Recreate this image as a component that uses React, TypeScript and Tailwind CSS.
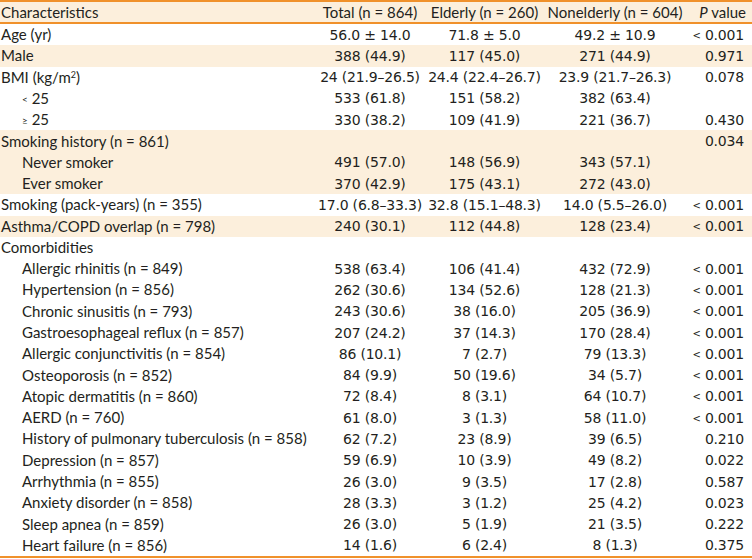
import React from "react";

type Row = {
  label: React.ReactNode;
  indent?: boolean;
  shade?: boolean;
  t?: string;
  e?: string;
  n?: string;
  p?: string;
};

const Lt = () => <span className="text-[10px] relative -top-[1px]">&lt;</span>;
const Ge = () => <span className="text-[10px] relative -top-[1px]">≥</span>;

const pv = (s?: string) => {
  if (!s) return null;
  if (s.startsWith("<")) {
    return (
      <>
        <Lt /> {s.slice(2)}
      </>
    );
  }
  return s;
};

const rows: Row[] = [
  { label: "Age (yr)", t: "56.0 ± 14.0", e: "71.8 ± 5.0", n: "49.2 ± 10.9", p: "< 0.001" },
  { label: "Male", shade: true, t: "388 (44.9)", e: "117 (45.0)", n: "271 (44.9)", p: "0.971" },
  {
    label: (
      <>
        BMI (kg/m<sup className="text-[9px] relative -top-[5px]">2</sup>)
      </>
    ),
    t: "24 (21.9–26.5)",
    e: "24.4 (22.4–26.7)",
    n: "23.9 (21.7–26.3)",
    p: "0.078",
  },
  { label: (<><Lt /> 25</>), indent: true, t: "533 (61.8)", e: "151 (58.2)", n: "382 (63.4)" },
  { label: (<><Ge /> 25</>), indent: true, t: "330 (38.2)", e: "109 (41.9)", n: "221 (36.7)", p: "0.430" },
  { label: "Smoking history (n = 861)", shade: true, p: "0.034" },
  { label: "Never smoker", indent: true, shade: true, t: "491 (57.0)", e: "148 (56.9)", n: "343 (57.1)" },
  { label: "Ever smoker", indent: true, shade: true, t: "370 (42.9)", e: "175 (43.1)", n: "272 (43.0)" },
  { label: "Smoking (pack-years) (n = 355)", t: "17.0 (6.8–33.3)", e: "32.8 (15.1–48.3)", n: "14.0 (5.5–26.0)", p: "< 0.001" },
  { label: "Asthma/COPD overlap (n = 798)", shade: true, t: "240 (30.1)", e: "112 (44.8)", n: "128 (23.4)", p: "< 0.001" },
  { label: "Comorbidities" },
  { label: "Allergic rhinitis (n = 849)", indent: true, t: "538 (63.4)", e: "106 (41.4)", n: "432 (72.9)", p: "< 0.001" },
  { label: "Hypertension (n = 856)", indent: true, t: "262 (30.6)", e: "134 (52.6)", n: "128 (21.3)", p: "< 0.001" },
  { label: "Chronic sinusitis (n = 793)", indent: true, t: "243 (30.6)", e: "38 (16.0)", n: "205 (36.9)", p: "< 0.001" },
  { label: "Gastroesophageal reflux (n = 857)", indent: true, t: "207 (24.2)", e: "37 (14.3)", n: "170 (28.4)", p: "< 0.001" },
  { label: "Allergic conjunctivitis (n = 854)", indent: true, t: "86 (10.1)", e: "7 (2.7)", n: "79 (13.3)", p: "< 0.001" },
  { label: "Osteoporosis (n = 852)", indent: true, t: "84 (9.9)", e: "50 (19.6)", n: "34 (5.7)", p: "< 0.001" },
  { label: "Atopic dermatitis (n = 860)", indent: true, t: "72 (8.4)", e: "8 (3.1)", n: "64 (10.7)", p: "< 0.001" },
  { label: "AERD (n = 760)", indent: true, t: "61 (8.0)", e: "3 (1.3)", n: "58 (11.0)", p: "< 0.001" },
  { label: "History of pulmonary tuberculosis (n = 858)", indent: true, t: "62 (7.2)", e: "23 (8.9)", n: "39 (6.5)", p: "0.210" },
  { label: "Depression (n = 857)", indent: true, t: "59 (6.9)", e: "10 (3.9)", n: "49 (8.2)", p: "0.022" },
  { label: "Arrhythmia (n = 855)", indent: true, t: "26 (3.0)", e: "9 (3.5)", n: "17 (2.8)", p: "0.587" },
  { label: "Anxiety disorder (n = 858)", indent: true, t: "28 (3.3)", e: "3 (1.2)", n: "25 (4.2)", p: "0.023" },
  { label: "Sleep apnea (n = 859)", indent: true, t: "26 (3.0)", e: "5 (1.9)", n: "21 (3.5)", p: "0.222" },
  { label: "Heart failure (n = 856)", indent: true, t: "14 (1.6)", e: "6 (2.4)", n: "8 (1.3)", p: "0.375" },
];

const cols = "grid grid-cols-[316px_108px_121px_140px_67px] items-center whitespace-nowrap";
const num = "text-center text-[14px] font-['DejaVu_Sans',sans-serif] tracking-[-0.2px]";

export default function App() {
  return (
    <div className="w-[752px] h-[559px] bg-white text-[#231f20] text-[15px] leading-none font-['Lato','Noto_Sans',sans-serif]">
      <div className="border-t-2 border-b-2 border-[#f0912b]">
        <div className={`${cols} h-[20px] bg-[#fcefdc]`}>
          <div className="pl-[1px]">Characteristics</div>
          <div className="text-center">Total (n = 864)</div>
          <div className="text-center">Elderly (n = 260)</div>
          <div className="text-center">Nonelderly (n = 604)</div>
          <div className="text-right pr-[6px]">
            <i>P</i> value
          </div>
        </div>
      </div>
      <div className="grid grid-rows-[repeat(25,minmax(0,1fr))] h-[534px] border-b-2 border-[#f0912b]">
        {rows.map((r, i) => (
          <div key={i} className={`${cols} ${r.shade ? "bg-[#fcefdc]" : ""}`}>
            <div className={r.indent ? "pl-[22px]" : "pl-[1px]"}>{r.label}</div>
            <div className={num}>{r.t}</div>
            <div className={num}>{r.e}</div>
            <div className={num}>{r.n}</div>
            <div className="text-right pr-[8px] text-[14px] font-['DejaVu_Sans',sans-serif] tracking-[-0.2px]">{pv(r.p)}</div>
          </div>
        ))}
      </div>
    </div>
  );
}
